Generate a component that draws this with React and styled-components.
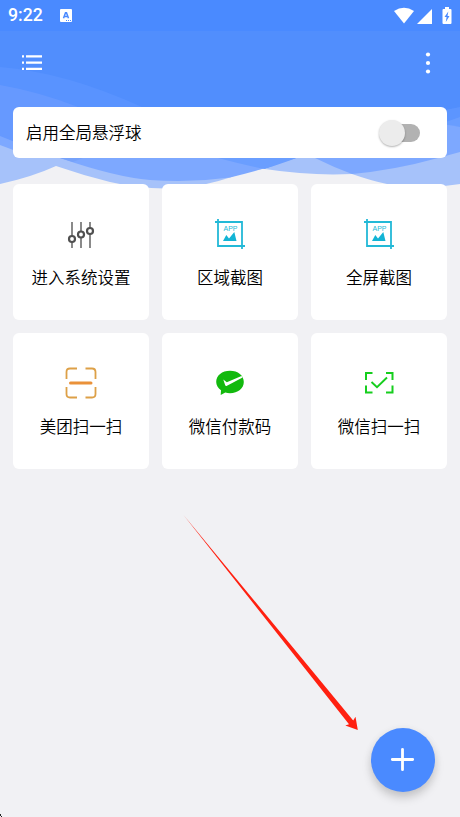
import React, { useState } from "react";
import styled, { createGlobalStyle } from "styled-components";

const theme = {
  primary: "#4a8aff",
  header: "#518efd",
  background: "#f1f1f4",
  card: "#ffffff",
  text: "#000000",
};

const GlobalStyle = createGlobalStyle`
  body {
    margin: 0;
    background-color: ${theme.background};
    font-family: "Noto Sans CJK SC", "Roboto", sans-serif;
  }
`;

const Screen = styled.div`
  position: relative;
  display: flex;
  flex-direction: column;
  width: 460px;
  height: 817px;
  overflow: hidden;
  background-color: ${theme.background};
`;

const WavesBackground = styled.svg`
  position: absolute;
  top: 0;
  left: 0;
`;

const StatusBar = styled.div`
  position: relative;
  display: flex;
  align-items: center;
  justify-content: space-between;
  height: 31px;
  box-sizing: border-box;
  padding: 0 7px 0 8px;
  background-color: ${theme.primary};
`;

const StatusGroup = styled.div`
  display: flex;
  align-items: center;
`;

const Time = styled.span`
  width: 52px;
  color: white;
  font-family: "Roboto", sans-serif;
  font-size: 17.7px;
  font-weight: 500;
  line-height: 31px;
`;

const Toolbar = styled.div`
  position: relative;
  display: flex;
  align-items: center;
  justify-content: space-between;
  height: 63px;
  padding: 0 26px 0 22px;
`;

const IconButton = styled.button`
  display: flex;
  padding: 0;
  border: none;
  background: none;
  cursor: pointer;
`;

const Content = styled.div`
  position: relative;
  display: flex;
  flex-direction: column;
  gap: 26px;
  padding: 13px;
`;

const SwitchCard = styled.div`
  display: flex;
  align-items: center;
  justify-content: space-between;
  height: 51px;
  box-sizing: border-box;
  padding: 0 27px 0 13px;
  border-radius: 6px;
  background-color: ${theme.card};
`;

const Label = styled.span`
  padding-bottom: 2px;
  color: ${theme.text};
  font-size: 16.5px;
  font-weight: 350;
  line-height: 24px;
  white-space: nowrap;
`;

const Track = styled.button`
  display: flex;
  align-items: center;
  justify-content: ${(props) => (props.$on ? "flex-end" : "flex-start")};
  width: 36px;
  height: 18px;
  padding: 0;
  border: none;
  border-radius: 9px;
  background-color: ${(props) => (props.$on ? "#a4c4ff" : "#b2b2b2")};
  cursor: pointer;
`;

const Thumb = styled.span`
  flex-shrink: 0;
  width: 26px;
  height: 26px;
  margin: 0 -5px;
  border-radius: 50%;
  background-color: ${(props) => (props.$on ? theme.primary : "#ececec")};
  box-shadow: 0 1px 2px rgba(0, 0, 0, 0.3);
`;

const Grid = styled.div`
  display: grid;
  grid-template-columns: repeat(3, 136px);
  grid-auto-rows: 136px;
  gap: 13px;
`;

const Tile = styled.div`
  display: flex;
  flex-direction: column;
  align-items: center;
  gap: 13px;
  box-sizing: border-box;
  padding-top: 32px;
  border-radius: 6px;
  background-color: ${theme.card};
`;

const AddButton = styled.button`
  position: absolute;
  right: 25.5px;
  bottom: 25.5px;
  display: flex;
  align-items: center;
  justify-content: center;
  width: 64px;
  height: 64px;
  padding: 0;
  border: none;
  border-radius: 50%;
  background-color: ${theme.primary};
  box-shadow: 0 6px 10px rgba(0, 0, 0, 0.17), 0 1px 8px rgba(0, 0, 0, 0.05);
  cursor: pointer;
`;

const Pointer = styled.svg`
  position: absolute;
  left: 183px;
  top: 515px;
  pointer-events: none;
`;

const Corner = styled.svg`
  position: absolute;
  left: 0;
  bottom: 0;
`;

const Waves = () => (
  <WavesBackground width="460" height="190" viewBox="0 0 460 190">
    <path fill={theme.header} d="M0 0H460V150H0Z" />
    <path fill="#5993ff" d="M0 67Q65 72 142 107V150H0Z" />
    <path fill="#6699ff" d="M0 85Q40 92 78 107V150H0Z" />
    <path fill="#7da8ff" d="M0 136L20 144V155H0Z" />
    <path
      fill="#a6c2fa"
      d="M0 145Q18 152 36 158H298L265 168.5Q240 173 230 177.500Q205 186 178 188Q145 190 110 182Q82 175 56 166Q32 177 0 184Z"
    />
    <path
      fill="#7da8ff"
      d="M60 158Q115 177 150 180Q190 183 230 177.500Q265 169 297 158Z"
    />
    <path fill="#76a2fa" d="M60 158L73 162L83 158Z" />
    <path fill="#6a9eff" d="M218 158Q240 164 265 169Q282 165 297 158Z" />
    <path
      fill="#a6c2fa"
      d="M297 158L265 169Q310 176 352 174Q372 181 387 184Q430 189 460 184V150H400Z"
    />
    <path fill="#7da8ff" d="M315 158Q333 167 352 174Q395 170 438 158L460 152V124H440V158Z" />
    <path fill="#5c95ff" d="M440 111L460 107V130H440Z" />
    <path fill="#699dff" d="M440 124L460 117V130H440Z" />
    <path fill="#7da8ff" d="M440 124Q450 125 460 127V135H440Z" />
  </WavesBackground>
);

const KeyboardIcon = () => (
  <svg width="12" height="13" viewBox="0 0 12 13">
    <rect width="12" height="13" rx="1" fill="white" />
    <path
      d="M3.500 9.200L5.500 3.800H6.500L8.500 9.200M4.300 7.400H7.700"
      fill="none"
      stroke={theme.primary}
      strokeWidth="1.500"
    />
    <path d="M6 11.500H11" stroke={theme.primary} strokeDasharray="1 1" />
  </svg>
);

const SystemIcons = () => (
  <svg width="59" height="17" viewBox="394 6 59 17" fill="white">
    <path d="M394 10Q404 3.500 414 10L404 22.500Z" />
    <path d="M417 23L432 8V23Z" />
    <path d="M445 6H449V8H450.500Q451.500 8 451.500 9V22Q451.500 23 450.500 23H443.500Q442.500 23 442.500 22V9Q442.500 8 443.500 8H445Z" />
    <path fill={theme.primary} d="M448.300 10.500L444.500 16H446.600L445.800 21L449.500 15H447.500Z" />
  </svg>
);

const MenuIcon = () => (
  <svg width="20" height="16" viewBox="0 0 20 16" fill="white">
    <path d="M0 .2H2V2.500H0ZM4 .2H20V2.500H4ZM0 6.500H2V8.800H0ZM4 6.500H20V8.800H4ZM0 12.800H2V15.100H0ZM4 12.800H20V15.100H4Z" />
  </svg>
);

const MoreIcon = () => (
  <svg width="12" height="22" viewBox="0 0 12 22" fill="white">
    <circle cx="6" cy="2.500" r="2.100" />
    <circle cx="6" cy="11" r="2.100" />
    <circle cx="6" cy="19.500" r="2.100" />
  </svg>
);

const SlidersIcon = () => (
  <svg width="36" height="36" viewBox="0 0 36 36">
    <path d="M9 6V32M18 6V32M27 6V32" stroke="#8a8a8a" strokeWidth="2" />
    <g fill="white" stroke="#505050" strokeWidth="2.200">
      <circle cx="9" cy="23" r="3" />
      <circle cx="18" cy="18.500" r="3" />
      <circle cx="27" cy="15" r="3" />
    </g>
  </svg>
);

const AppText = styled.text`
  font-family: "Liberation Sans", sans-serif;
  font-size: 7px;
  fill: #21b9d6;
`;

const CropIcon = () => (
  <svg width="36" height="36" viewBox="0 0 36 36">
    <path
      d="M3 6H30V33M6 3V30H33"
      fill="none"
      stroke="#23b9d7"
      strokeWidth="1.800"
    />
    <AppText x="11.500" y="15.200" textLength="14" lengthAdjust="spacingAndGlyphs">
      APP
    </AppText>
    <path d="M11 25L14.300 19L17 22.500L22.300 16L24.500 25Z" fill="#12b4d5" />
  </svg>
);

const ScanIcon = () => (
  <svg width="36" height="36" viewBox="0 0 36 36" fill="none" stroke="#dda047">
    <path
      d="M3.500 14V7Q3.500 3.500 7 3.500H14M22.500 3.500H29Q32.500 3.500 32.500 7V14M32.500 22V29Q32.500 32.500 29 32.500H22.500M14 32.500H7Q3.500 32.500 3.500 29V22"
      strokeWidth="1.800"
    />
    <path d="M7.500 18H28" stroke="#ea9139" strokeWidth="3" strokeLinecap="round" />
  </svg>
);

const PayIcon = () => (
  <svg width="36" height="36" viewBox="0 0 36 36">
    <path
      d="M18 5.800C10 5.800 4.200 10.600 4.200 17C4.200 20.300 6 23 9 25.300L8.700 30L13.300 27.600C14.800 28 16.400 28.200 18 28.200C26 28.200 31.800 23.300 31.800 17C31.800 10.600 26 5.800 18 5.800Z"
      fill="#13b90e"
    />
    <path
      d="M11.300 14.500L14.800 17.200L29.500 11L30.600 12.500L15 20.700Q13.600 21.300 13.100 20Z"
      fill="white"
    />
  </svg>
);

const CheckScanIcon = () => (
  <svg width="36" height="36" viewBox="0 0 36 36" fill="none" stroke="#16ce1e">
    <path
      d="M5 15V8H11.500M25 8H31.500V15M31.500 20.500V27.500H25M11.500 27.500H5V20.500"
      strokeWidth="2"
    />
    <path d="M10.500 17L16 22.300L26 12.500" strokeWidth="1.900" />
  </svg>
);

const Arrow = () => (
  <Pointer width="177" height="217" viewBox="183 515 177 217">
    <path
      d="M183.500 515L353.200 720.500L355.500 716.700L357.800 730L345.300 725.600L349 724.300Z"
      fill="#ff2010"
    />
  </Pointer>
);

const PlusIcon = () => (
  <svg width="25" height="25" viewBox="0 0 25 25">
    <path
      d="M12.500 2.300V22.700M2.300 12.500H22.700"
      stroke="white"
      strokeWidth="2.800"
      strokeLinecap="round"
    />
  </svg>
);

const actions = [
  { name: "进入系统设置", icon: <SlidersIcon /> },
  { name: "区域截图", icon: <CropIcon /> },
  { name: "全屏截图", icon: <CropIcon /> },
  { name: "美团扫一扫", icon: <ScanIcon /> },
  { name: "微信付款码", icon: <PayIcon /> },
  { name: "微信扫一扫", icon: <CheckScanIcon /> },
];

const App = () => {
  const [enabled, setEnabled] = useState(false);

  return (
    <Screen>
      <GlobalStyle />
      <Waves />
      <StatusBar>
        <StatusGroup>
          <Time>9:22</Time>
          <KeyboardIcon />
        </StatusGroup>
        <SystemIcons />
      </StatusBar>
      <Toolbar>
        <IconButton>
          <MenuIcon />
        </IconButton>
        <IconButton>
          <MoreIcon />
        </IconButton>
      </Toolbar>
      <Content>
        <SwitchCard>
          <Label>启用全局悬浮球</Label>
          <Track $on={enabled} onClick={() => setEnabled(!enabled)}>
            <Thumb $on={enabled} />
          </Track>
        </SwitchCard>
        <Grid>
          {actions.map((action) => (
            <Tile key={action.name}>
              {action.icon}
              <Label>{action.name}</Label>
            </Tile>
          ))}
        </Grid>
      </Content>
      <Arrow />
      <AddButton>
        <PlusIcon />
      </AddButton>
      <Corner width="2" height="3" viewBox="0 0 2 3">
        <path d="M0 0H1V2H0ZM1 2H2V3H1Z" fill="#222" />
      </Corner>
    </Screen>
  );
};

export default App;
